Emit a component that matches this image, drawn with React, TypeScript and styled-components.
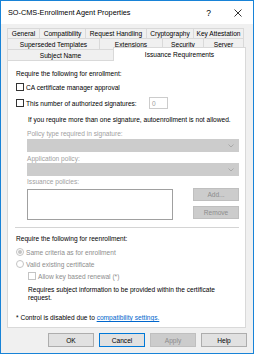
import React from "react";
import styled, { createGlobalStyle } from "styled-components";

const GlobalStyle = createGlobalStyle`
  html, body {
    margin: 0;
    padding: 0;
    background: #ffffff;
  }
  body {
    font-family: "Liberation Sans", Arial, sans-serif;
    font-size: 6.6px;
    color: #000;
  }
  * {
    box-sizing: border-box;
  }
`;

const Window = styled.div`
  width: 254px;
  height: 354px;
  border: 1px solid #1883d7;
  background: #f0f0f0;
  display: flex;
  flex-direction: column;
`;

const TitleBar = styled.div`
  height: 23px;
  background: #ffffff;
  display: flex;
  align-items: center;
  padding-left: 7px;
`;

const Title = styled.div`
  flex: 1;
  font-size: 7.3px;
  white-space: nowrap;
`;

const TitleButton = styled.div<{ $w: number }>`
  width: ${(p) => p.$w}px;
  height: 23px;
  display: flex;
  align-items: center;
  justify-content: center;
  font-size: 8.5px;
`;

const Body = styled.div`
  flex: 1;
  display: flex;
  flex-direction: column;
  padding: 4px 6px 0 6px;
`;

const TabStrip = styled.div`
  display: flex;
  flex-direction: column;
  height: 32px;
`;

const TabRow = styled.div<{ $h: number; $w: number }>`
  display: flex;
  align-items: flex-end;
  height: ${(p) => p.$h}px;
  width: ${(p) => p.$w}px;
`;

const Tab = styled.div<{ $w: number; $active?: boolean }>`
  width: ${(p) => p.$w}px;
  height: ${(p) => (p.$active ? "14px" : "100%")};
  margin-bottom: ${(p) => (p.$active ? "-1px" : "0")};
  position: ${(p) => (p.$active ? "relative" : "static")};
  z-index: ${(p) => (p.$active ? 1 : "auto")};
  background: ${(p) => (p.$active ? "#ffffff" : "#f0f0f0")};
  border: 1px solid #d9d9d9;
  border-bottom: none;
  border-right: ${(p) => (p.$active ? "1px solid #d9d9d9" : "none")};
  display: flex;
  align-items: center;
  justify-content: center;
  white-space: nowrap;
  &:last-child {
    border-right: 1px solid #d9d9d9;
  }
`;

const Panel = styled.div`
  width: 239px;
  height: 268px;
  background: #ffffff;
  border: 1px solid #d9d9d9;
  padding: 9px 6px 0 8px;
  display: flex;
  flex-direction: column;
`;

const Line = styled.div<{ $mt?: number; $indent?: number; $disabled?: boolean }>`
  line-height: 8px;
  margin-top: ${(p) => p.$mt ?? 0}px;
  margin-left: ${(p) => p.$indent ?? 0}px;
  color: ${(p) => (p.$disabled ? "#a0a0a0" : "#000")};
  white-space: nowrap;
`;

const OptionRow = styled.div<{ $mt?: number; $indent?: number; $h?: number; $disabled?: boolean }>`
  display: flex;
  align-items: center;
  gap: 2px;
  height: ${(p) => p.$h ?? 8}px;
  margin-top: ${(p) => p.$mt ?? 0}px;
  margin-left: ${(p) => p.$indent ?? 0}px;
  color: ${(p) => (p.$disabled ? "#8d8d8d" : "#000")};
  white-space: nowrap;
`;

const OptionLabel = styled.span<{ $w?: number }>`
  width: ${(p) => (p.$w ? `${p.$w}px` : "auto")};
`;

const Check = styled.span<{ $disabled?: boolean }>`
  width: 8px;
  height: 8px;
  flex: none;
  background: #ffffff;
  border: 1px solid ${(p) => (p.$disabled ? "#c4c4c4" : "#333333")};
`;

const Radio = styled.span<{ $checked?: boolean }>`
  width: 8px;
  height: 8px;
  flex: none;
  border-radius: 50%;
  border: 1px solid #c4c4c4;
  display: flex;
  align-items: center;
  justify-content: center;
  &::after {
    content: "";
    width: 4px;
    height: 4px;
    border-radius: 50%;
    background: ${(p) => (p.$checked ? "#c4c4c4" : "transparent")};
  }
`;

const NumberBox = styled.div`
  width: 19px;
  height: 12px;
  border: 1px solid #cccccc;
  background: #ffffff;
  color: #a0a0a0;
  padding-left: 2px;
  display: flex;
  align-items: center;
`;

const Dropdown = styled.div<{ $mt?: number }>`
  width: 212px;
  height: 13px;
  margin-left: 11px;
  margin-top: ${(p) => p.$mt ?? 0}px;
  background: #cccccc;
  border: 1px solid #cccccc;
  display: flex;
  align-items: center;
  justify-content: flex-end;
  padding-right: 4px;
`;

const ListRow = styled.div`
  display: flex;
  margin-top: 2px;
  margin-left: 11px;
  height: 32px;
  gap: 20px;
`;

const ListBox = styled.div`
  width: 146px;
  height: 31px;
  margin-top: 1px;
  background: #ffffff;
  border: 1px solid #a0a0a0;
`;

const SideButtons = styled.div`
  display: flex;
  flex-direction: column;
  gap: 5px;
`;

const Button = styled.div<{ $w: number; $h: number; $disabled?: boolean; $focused?: boolean }>`
  width: ${(p) => p.$w}px;
  height: ${(p) => p.$h}px;
  background: ${(p) => (p.$disabled ? "#cccccc" : "#e1e1e1")};
  border: 1px solid
    ${(p) => (p.$focused ? "#0078d7" : p.$disabled ? "#bfbfbf" : "#adadad")};
  color: ${(p) => (p.$disabled ? "#8d8d8d" : "#000")};
  display: flex;
  align-items: center;
  justify-content: center;
  white-space: nowrap;
`;

const Separator = styled.div`
  height: 1px;
  width: 224px;
  margin-top: 7px;
  margin-left: -1px;
  background: #d4d4d4;
`;

const Link = styled.span`
  color: #0066cc;
  text-decoration: underline;
`;

const Footer = styled.div`
  display: flex;
  justify-content: flex-end;
  gap: 5px;
  margin-top: 5px;
`;

const Chevron = () => (
  <svg width="6" height="4" viewBox="0 0 6 4">
    <path d="M0.5 0.5 L3 3 L5.5 0.5" fill="none" stroke="#a0a0a0" strokeWidth="0.8" />
  </svg>
);

const CloseIcon = () => (
  <svg width="8" height="8" viewBox="0 0 8 8">
    <path d="M0.5 0.5 L7.5 7.5 M7.5 0.5 L0.5 7.5" stroke="#000" strokeWidth="0.8" />
  </svg>
);

const App = () => {
  return (
    <>
      <GlobalStyle />
      <Window>
        <TitleBar>
          <Title>SO-CMS-Enrollment Agent Properties</Title>
          <TitleButton $w={27}>?</TitleButton>
          <TitleButton $w={31}>
            <CloseIcon />
          </TitleButton>
        </TitleBar>
        <Body>
          <TabStrip>
            <TabRow $h={10} $w={237}>
              <Tab $w={32}>General</Tab>
              <Tab $w={46}>Compatibility</Tab>
              <Tab $w={61}>Request Handling</Tab>
              <Tab $w={47}>Cryptography</Tab>
              <Tab $w={51}>Key Attestation</Tab>
            </TabRow>
            <TabRow $h={11} $w={237}>
              <Tab $w={92}>Superseded Templates</Tab>
              <Tab $w={63}>Extensions</Tab>
              <Tab $w={41}>Security</Tab>
              <Tab $w={41}>Server</Tab>
            </TabRow>
            <TabRow $h={11} $w={239}>
              <Tab $w={106}>Subject Name</Tab>
              <Tab $w={133} $active>
                Issuance Requirements
              </Tab>
            </TabRow>
          </TabStrip>
          <Panel>
            <Line>Require the following for enrollment:</Line>
            <OptionRow $mt={5}>
              <Check />
              <OptionLabel>CA certificate manager approval</OptionLabel>
            </OptionRow>
            <OptionRow $mt={6} $h={12}>
              <Check />
              <OptionLabel $w={121}>This number of authorized signatures:</OptionLabel>
              <NumberBox>0</NumberBox>
            </OptionRow>
            <Line $mt={7} $indent={12}>
              If you require more than one signature, autoenrollment is not allowed.
            </Line>
            <Line $mt={6} $indent={11} $disabled>
              Policy type required in signature:
            </Line>
            <Dropdown $mt={1}>
              <Chevron />
            </Dropdown>
            <Line $mt={3} $indent={11} $disabled>
              Application policy:
            </Line>
            <Dropdown>
              <Chevron />
            </Dropdown>
            <Line $mt={2} $indent={11} $disabled>
              Issuance policies:
            </Line>
            <ListRow>
              <ListBox />
              <SideButtons>
                <Button $w={46} $h={13} $disabled>
                  Add...
                </Button>
                <Button $w={46} $h={13} $disabled>
                  Remove
                </Button>
              </SideButtons>
            </ListRow>
            <Separator />
            <Line $mt={7}>Require the following for reenrollment:</Line>
            <OptionRow $mt={5} $disabled>
              <Radio $checked />
              <OptionLabel>Same criteria as for enrollment</OptionLabel>
            </OptionRow>
            <OptionRow $mt={4} $disabled>
              <Radio />
              <OptionLabel>Valid existing certificate</OptionLabel>
            </OptionRow>
            <OptionRow $mt={4} $indent={12} $disabled>
              <Check $disabled />
              <OptionLabel>Allow key based renewal (*)</OptionLabel>
            </OptionRow>
            <Line $mt={6} $indent={12}>
              Requires subject information to be provided within the certificate
              <br />
              request.
            </Line>
            <Line $mt={12}>
              * Control is disabled due to <Link>compatibility settings.</Link>
            </Line>
          </Panel>
          <Footer>
            <Button $w={46} $h={14}>
              OK
            </Button>
            <Button $w={46} $h={14} $focused>
              Cancel
            </Button>
            <Button $w={46} $h={14} $disabled>
              Apply
            </Button>
            <Button $w={46} $h={14}>
              Help
            </Button>
          </Footer>
        </Body>
      </Window>
    </>
  );
};

export default App;
